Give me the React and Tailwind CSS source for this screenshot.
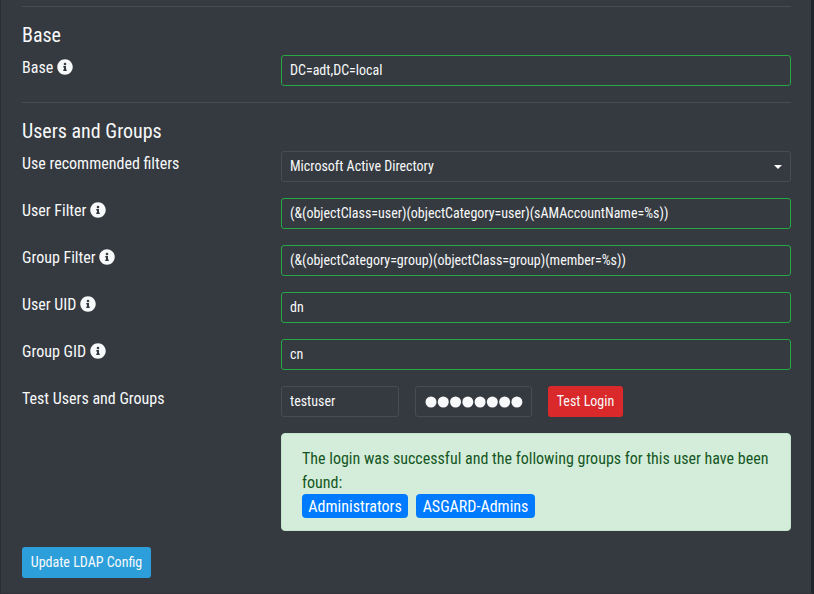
import React from "react";

function InfoIcon() {
  return (
    <svg viewBox="0 0 512 512" className="ml-[3.5px] inline-block size-4 align-[-2px]" fill="currentColor">
      <path d="M256 8C119.043 8 8 119.083 8 256c0 136.997 111.043 248 248 248s248-111.003 248-248C504 119.083 392.957 8 256 8zm0 110c23.196 0 42 18.804 42 42s-18.804 42-42 42-42-18.804-42-42 18.804-42 42-42zm56 254c0 6.627-5.373 12-12 12h-88c-6.627 0-12-5.373-12-12v-24c0-6.627 5.373-12 12-12h12v-64h-12c-6.627 0-12-5.373-12-12v-24c0-6.627 5.373-12 12-12h64c6.627 0 12 5.373 12 12v100h12c6.627 0 12 5.373 12 12v24z" />
    </svg>
  );
}

function Row({ label, info, children }) {
  return (
    <div className="mb-4 flex">
      <div className="w-[259px] shrink-0 pt-px text-base leading-6">
        {label}
        {info && <InfoIcon />}
      </div>
      <div className="min-w-0 flex-1">{children}</div>
    </div>
  );
}

function Field({ value }) {
  return (
    <div className="flex h-[31px] items-center rounded-[3px] border border-[#28a745] px-2 text-sm leading-[21px]">
      {value}
    </div>
  );
}

export default function App() {
  return (
    <div className="h-[594px] w-[814px] overflow-hidden border-r-[3px] border-b border-l border-r-[#212428] border-b-[#303338] border-l-[#2a2d31] bg-[#353940] pt-1.5 pr-5 pl-[21px] font-['Roboto_Condensed','Roboto',sans-serif] text-[#f8f9fa] [font-stretch:75%]">
      <hr className="border-[#484c54]" />
      <h5 className="mt-4 mb-2 text-xl leading-6">Base</h5>
      <Row label="Base" info>
        <Field value="DC=adt,DC=local" />
      </Row>
      <hr className="border-[#484c54]" />
      <h5 className="mt-4 mb-2 text-xl leading-6">Users and Groups</h5>
      <Row label="Use recommended filters">
        <div className="flex h-[31px] items-center justify-between rounded-[3px] border border-[#484c54] px-2 text-sm leading-[21px]">
          <span>Microsoft Active Directory</span>
          <svg viewBox="0 0 8 4" className="mt-px h-1 w-2" fill="#fff">
            <path d="M0 0h8L4 4z" />
          </svg>
        </div>
      </Row>
      <Row label="User Filter" info>
        <Field value="(&(objectClass=user)(objectCategory=user)(sAMAccountName=%s))" />
      </Row>
      <Row label="Group Filter" info>
        <Field value="(&(objectCategory=group)(objectClass=group)(member=%s))" />
      </Row>
      <Row label="User UID" info>
        <Field value="dn" />
      </Row>
      <Row label="Group GID" info>
        <Field value="cn" />
      </Row>
      <Row label="Test Users and Groups">
        <div className="flex gap-4 text-sm leading-[21px]">
          <div className="flex h-[31px] w-[118px] items-center rounded-[3px] border border-[#454d55] px-2">testuser</div>
          <div className="flex h-[31px] w-[117px] items-center rounded-[3px] border border-[#454d55] pt-px pl-[9px]">
            <svg viewBox="0 0 98 12" className="h-3 w-[98px]" fill="#f8f9fa">
              {Array.from({ length: 8 }, (_, i) => (
                <circle key={i} cx={6 + i * 12.27} cy="6" r="5.5" />
              ))}
            </svg>
          </div>
          <button className="h-[31px] w-[75px] rounded-[3px] bg-[#d9292b] whitespace-nowrap">Test Login</button>
        </div>
        <div className="mt-4 h-[98px] rounded border border-[#c3e6cb] bg-[#d4edda] px-5 pt-[13px] text-base leading-6 text-[#155724]">
          <p>The login was successful and the following groups for this user have been found:</p>
          <div className="-mt-px flex gap-2 text-white">
            <span className="flex h-6 w-[106px] items-center justify-center rounded bg-[#007bff] pt-0.5">Administrators</span>
            <span className="flex h-6 w-[119px] items-center justify-center rounded bg-[#007bff] pt-0.5">ASGARD-Admins</span>
          </div>
        </div>
      </Row>
      <button className="h-[31px] w-[129px] rounded-[3px] bg-[#2c9fdb] text-sm leading-[21px] whitespace-nowrap">
        Update LDAP Config
      </button>
    </div>
  );
}
